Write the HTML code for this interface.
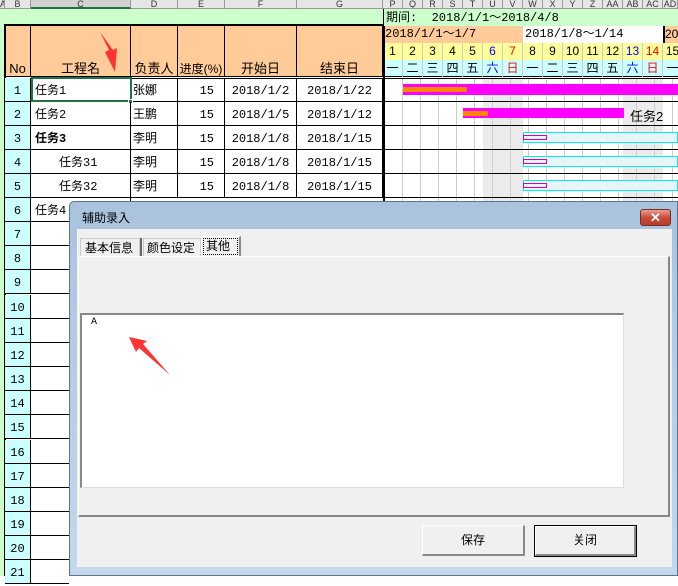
<!DOCTYPE html>
<html><head><meta charset="utf-8">
<style>
*{margin:0;padding:0;box-sizing:border-box}
body{width:678px;height:576px;overflow:hidden;background:#fff;position:relative;font-family:"Liberation Sans","Noto Sans CJK JP",sans-serif;font-size:13px;color:#000}
.a{position:absolute}
.ch{position:absolute;top:0;height:9px;background:#e6e6e6;border-right:1px solid #9a9a9a;border-bottom:1px solid #9a9a9a;font-size:9px;line-height:8px;text-align:center;color:#333;overflow:hidden}
.hd{position:absolute;top:26px;height:51px;background:#fc9;border-right:1px solid #000;text-align:center;line-height:14px;padding-top:36px;font-size:13px}
.row{position:absolute;left:5px;width:378px;height:24px;border-bottom:1px solid #000}
.c{position:absolute;top:0;height:100%;line-height:26px;border-right:1px solid #000;font-size:12px;white-space:nowrap;font-family:"Liberation Mono","Noto Sans CJK JP",monospace}
.num{left:0;width:26px;background:#cff;text-align:center}
.dy{position:absolute;width:20px;height:17px;text-align:center;line-height:17px;font-size:12px;border-right:1px solid #ccc}
.lrow{position:absolute;left:5px;width:64px;height:24px;border-bottom:1px solid #000}
</style></head><body>
<div class="ch" style="left:0;width:5px">A</div>
<div class="ch" style="left:5px;width:26px">B</div>
<div class="ch" style="left:31px;width:100px;background:#d2d2d2;border-bottom:2px solid #217346">C</div>
<div class="ch" style="left:131px;width:47px">D</div>
<div class="ch" style="left:178px;width:47px">E</div>
<div class="ch" style="left:225px;width:72px">F</div>
<div class="ch" style="left:297px;width:86px">G</div>
<div class="ch" style="left:383px;width:20px">P</div><div class="ch" style="left:403px;width:20px">Q</div><div class="ch" style="left:423px;width:20px">R</div><div class="ch" style="left:443px;width:20px">S</div><div class="ch" style="left:463px;width:20px">T</div><div class="ch" style="left:483px;width:20px">U</div><div class="ch" style="left:503px;width:20px">V</div><div class="ch" style="left:523px;width:20px">W</div><div class="ch" style="left:543px;width:20px">X</div><div class="ch" style="left:563px;width:20px">Y</div><div class="ch" style="left:583px;width:20px">Z</div><div class="ch" style="left:603px;width:20px">AA</div><div class="ch" style="left:623px;width:20px">AB</div><div class="ch" style="left:643px;width:20px">AC</div><div class="ch" style="left:663px;width:15px">AD</div>
<div class="a" style="left:0;top:9px;width:678px;height:17px;background:#cfc"></div>
<div class="a" style="left:0;top:9px;width:5px;height:567px;background:#cfc"></div>
<div class="a" style="left:386px;top:10px;font-size:12px;line-height:16px;font-family:'Liberation Mono','Noto Sans CJK JP',monospace">期间:&nbsp; 2018/1/1～2018/4/8</div>
<div class="a" style="left:383px;top:9px;width:1px;height:17px;background:#000"></div>
<div class="a" style="left:4px;top:24px;width:380px;height:3px;background:#000"></div>
<div class="hd" style="left:5px;width:26px">No</div>
<div class="hd" style="left:31px;width:100px">工程名</div>
<div class="hd" style="left:131px;width:47px">负责人</div>
<div class="hd" style="left:178px;width:47px;font-size:12px">进度(%)</div>
<div class="hd" style="left:225px;width:72px">开始日</div>
<div class="hd" style="left:297px;width:86px">结束日</div>
<div class="a" style="left:4px;top:26px;width:2px;height:550px;background:#000"></div>
<div class="a" style="left:4px;top:76px;width:674px;height:3px;border-top:1px solid #000;border-bottom:1px solid #000"></div>
<div class="a" style="left:383px;top:26px;width:2px;height:550px;background:#000"></div>
<div class="a" style="left:385px;top:26px;width:138px;height:17px;background:#fc9;font-size:12px;line-height:17px;font-family:'Liberation Mono','Noto Sans CJK JP',monospace">2018/1/1～1/7</div>
<div class="a" style="left:523px;top:26px;width:140px;height:17px;background:#fff;font-size:12px;line-height:17px;padding-left:2px;font-family:'Liberation Mono','Noto Sans CJK JP',monospace">2018/1/8～1/14</div>
<div class="a" style="left:663px;top:26px;width:2px;height:17px;background:#000"></div>
<div class="a" style="left:665px;top:26px;width:13px;height:17px;background:#fc9;font-size:12px;line-height:17px;overflow:hidden">20</div>
<div class="a" style="left:385px;top:43px;width:293px;height:17px;background:#ff9"></div>
<div class="a" style="left:385px;top:60px;width:293px;height:16px;background:#cff"></div>
<div class="dy" style="left:383px;top:43px">1</div><div class="dy" style="left:403px;top:43px">2</div><div class="dy" style="left:423px;top:43px">3</div><div class="dy" style="left:443px;top:43px">4</div><div class="dy" style="left:463px;top:43px">5</div><div class="dy" style="left:483px;top:43px;color:#00f">6</div><div class="dy" style="left:503px;top:43px;color:#f00">7</div><div class="dy" style="left:523px;top:43px">8</div><div class="dy" style="left:543px;top:43px">9</div><div class="dy" style="left:563px;top:43px">10</div><div class="dy" style="left:583px;top:43px">11</div><div class="dy" style="left:603px;top:43px">12</div><div class="dy" style="left:623px;top:43px;color:#00f">13</div><div class="dy" style="left:643px;top:43px;color:#f00">14</div><div class="dy" style="left:663px;top:43px">15</div>
<div class="dy" style="left:383px;top:60px">一</div><div class="dy" style="left:403px;top:60px">二</div><div class="dy" style="left:423px;top:60px">三</div><div class="dy" style="left:443px;top:60px">四</div><div class="dy" style="left:463px;top:60px">五</div><div class="dy" style="left:483px;top:60px;color:#00f">六</div><div class="dy" style="left:503px;top:60px;color:#f00">日</div><div class="dy" style="left:523px;top:60px">一</div><div class="dy" style="left:543px;top:60px">二</div><div class="dy" style="left:563px;top:60px">三</div><div class="dy" style="left:583px;top:60px">四</div><div class="dy" style="left:603px;top:60px">五</div><div class="dy" style="left:623px;top:60px;color:#00f">六</div><div class="dy" style="left:643px;top:60px;color:#f00">日</div><div class="dy" style="left:663px;top:60px">一</div>
<div class="a" style="left:483px;top:79px;width:40px;height:125px;background:#ebebeb"></div>
<div class="a" style="left:623px;top:79px;width:40px;height:125px;background:#ebebeb"></div>
<div class="a" style="left:385px;top:79px;width:293px;height:125px;background:repeating-linear-gradient(90deg,transparent 0 17px,#ccc 17px 18px)"></div>
<div class="a" style="left:385px;top:101px;width:293px;height:1px;background:#000"></div>
<div class="a" style="left:385px;top:125px;width:293px;height:1px;background:#000"></div>
<div class="a" style="left:385px;top:149px;width:293px;height:1px;background:#000"></div>
<div class="a" style="left:385px;top:173px;width:293px;height:1px;background:#000"></div>
<div class="a" style="left:385px;top:197px;width:293px;height:1px;background:#000"></div>
<div class="a" style="left:403px;top:84px;width:275px;height:11px;background:#f0f"></div>
<div class="a" style="left:403px;top:87px;width:64px;height:5px;background:#f80"></div>
<div class="a" style="left:463px;top:108px;width:161px;height:10px;background:#f0f"></div>
<div class="a" style="left:463px;top:111px;width:25px;height:5px;background:#f80"></div>
<div class="a" style="left:630px;top:104px;line-height:26px">任务2</div>
<div class="a" style="left:523px;top:132px;width:155px;height:11px;background:#e6f6f6;border:1px solid #0ee"></div>
<div class="a" style="left:523px;top:135px;width:24px;height:5px;border:1px solid #c0c"></div>
<div class="a" style="left:523px;top:156px;width:155px;height:11px;background:#e6f6f6;border:1px solid #0ee"></div>
<div class="a" style="left:523px;top:159px;width:24px;height:5px;border:1px solid #c0c"></div>
<div class="a" style="left:523px;top:180px;width:155px;height:11px;background:#e6f6f6;border:1px solid #0ee"></div>
<div class="a" style="left:523px;top:183px;width:24px;height:5px;border:1px solid #c0c"></div>
<div class="row" style="top:78px"><div class="c num">1</div><div class="c" style="left:26px;width:100px;padding-left:4px">任务1</div><div class="c" style="left:126px;width:47px;padding-left:2px">张娜</div><div class="c" style="left:173px;width:47px;text-align:right;padding-right:10px">15</div><div class="c" style="left:220px;width:72px;text-align:center">2018/1/2</div><div class="c" style="left:292px;width:86px;text-align:center">2018/1/22</div></div>
<div class="a" style="left:31px;top:77px;width:101px;height:25px;border:2px solid #217346"></div>
<div class="a" style="left:128px;top:99px;width:5px;height:5px;background:#217346;border:1px solid #fff"></div>
<div class="row" style="top:102px"><div class="c num">2</div><div class="c" style="left:26px;width:100px;padding-left:4px">任务2</div><div class="c" style="left:126px;width:47px;padding-left:2px">王鹏</div><div class="c" style="left:173px;width:47px;text-align:right;padding-right:10px">15</div><div class="c" style="left:220px;width:72px;text-align:center">2018/1/5</div><div class="c" style="left:292px;width:86px;text-align:center">2018/1/12</div></div>
<div class="row" style="top:126px"><div class="c num">3</div><div class="c" style="left:26px;width:100px;padding-left:4px;font-weight:bold">任务3</div><div class="c" style="left:126px;width:47px;padding-left:2px">李明</div><div class="c" style="left:173px;width:47px;text-align:right;padding-right:10px">15</div><div class="c" style="left:220px;width:72px;text-align:center">2018/1/8</div><div class="c" style="left:292px;width:86px;text-align:center">2018/1/15</div></div>
<div class="row" style="top:150px"><div class="c num">4</div><div class="c" style="left:26px;width:100px;padding-left:28px">任务31</div><div class="c" style="left:126px;width:47px;padding-left:2px">李明</div><div class="c" style="left:173px;width:47px;text-align:right;padding-right:10px">15</div><div class="c" style="left:220px;width:72px;text-align:center">2018/1/8</div><div class="c" style="left:292px;width:86px;text-align:center">2018/1/15</div></div>
<div class="row" style="top:174px"><div class="c num">5</div><div class="c" style="left:26px;width:100px;padding-left:28px">任务32</div><div class="c" style="left:126px;width:47px;padding-left:2px">李明</div><div class="c" style="left:173px;width:47px;text-align:right;padding-right:10px">15</div><div class="c" style="left:220px;width:72px;text-align:center">2018/1/8</div><div class="c" style="left:292px;width:86px;text-align:center">2018/1/15</div></div>
<div class="row" style="top:198px"><div class="c num">6</div><div class="c" style="left:26px;width:100px;padding-left:4px">任务4</div></div>
<div class="lrow" style="top:222px"><div class="c num">7</div></div>
<div class="lrow" style="top:246px"><div class="c num">8</div></div>
<div class="lrow" style="top:270px"><div class="c num">9</div></div>
<div class="lrow" style="top:295px"><div class="c num">10</div></div>
<div class="lrow" style="top:319px"><div class="c num">11</div></div>
<div class="lrow" style="top:343px"><div class="c num">12</div></div>
<div class="lrow" style="top:367px"><div class="c num">13</div></div>
<div class="lrow" style="top:391px"><div class="c num">14</div></div>
<div class="lrow" style="top:415px"><div class="c num">15</div></div>
<div class="lrow" style="top:440px"><div class="c num">16</div></div>
<div class="lrow" style="top:464px"><div class="c num">17</div></div>
<div class="lrow" style="top:488px"><div class="c num">18</div></div>
<div class="lrow" style="top:512px"><div class="c num">19</div></div>
<div class="lrow" style="top:536px"><div class="c num">20</div></div>
<div class="lrow" style="top:560px"><div class="c num">21</div></div>
<svg class="a" style="left:95px;top:28px" width="30" height="48"><polygon points="5,4 14,22 10,24 20,44 22,20 18,22" fill="#f33"/></svg>
<div class="a" style="left:69px;top:201px;width:609px;height:375px;background:linear-gradient(#aac3dd,#c3d8ed);border:1px solid #5a7590;border-radius:5px 0 0 0"></div>
<div class="a" style="left:82px;top:208px;font-size:12px;line-height:20px">辅助录入</div>
<div class="a" style="left:640px;top:209px;width:31px;height:17px;border:1px solid #7a2a2a;border-radius:3px;background:linear-gradient(#e8a090,#c84c3c 50%,#b83c2c);color:#fff;font-weight:bold;text-align:center;line-height:15px;font-size:13px">✕</div>
<div class="a" style="left:77px;top:229px;width:595px;height:338px;background:#f0f0f0"></div>
<div class="a" style="left:80px;top:238px;width:60px;height:18px;border:1px solid #ccc;border-bottom:none;background:#f0f0f0;font-size:12px;line-height:18px;padding-left:4px">基本信息</div>
<div class="a" style="left:140px;top:238px;width:2px;height:18px;background:#666"></div>
<div class="a" style="left:143px;top:238px;width:58px;height:18px;border:1px solid #ccc;border-bottom:none;font-size:12px;line-height:18px;padding-left:3px">颜色设定</div>
<div class="a" style="left:201px;top:236px;width:40px;height:21px;border-top:1px solid #fff;border-left:1px solid #fff;border-right:2px solid #888;background:#f0f0f0"></div>
<div class="a" style="left:203px;top:238px;width:35px;height:17px;border:1px dotted #000;font-size:12px;line-height:15px;padding-left:2px">其他</div>
<div class="a" style="left:78px;top:256px;width:592px;height:261px;border-top:1px solid #fff;border-left:1px solid #fff;border-right:2px solid #888;border-bottom:2px solid #888"></div>
<div class="a" style="left:80px;top:313px;width:544px;height:175px;background:#fff;border-top:2px solid #888;border-left:2px solid #888;border-right:1px solid #ddd;border-bottom:1px solid #ddd"></div>
<div class="a" style="left:91px;top:317px;font-size:10px;font-family:'Liberation Mono',monospace">A</div>
<svg class="a" style="left:125px;top:333px" width="50" height="46"><polygon points="4,4 22,8 18,11 45,42 14,15 11,19" fill="#f33"/></svg>
<div class="a" style="left:422px;top:525px;width:103px;height:31px;border-top:1px solid #fff;border-left:1px solid #fff;border-right:2px solid #888;border-bottom:2px solid #888;background:#f0f0f0;text-align:center;line-height:29px;font-size:12px">保存</div>
<div class="a" style="left:534px;top:525px;width:103px;height:32px;border:1px solid #000;background:#f0f0f0"><div style="height:100%;border-top:1px solid #fff;border-left:1px solid #fff;border-right:2px solid #888;border-bottom:2px solid #888;text-align:center;line-height:27px;font-size:12px">关闭</div></div>
</body></html>
